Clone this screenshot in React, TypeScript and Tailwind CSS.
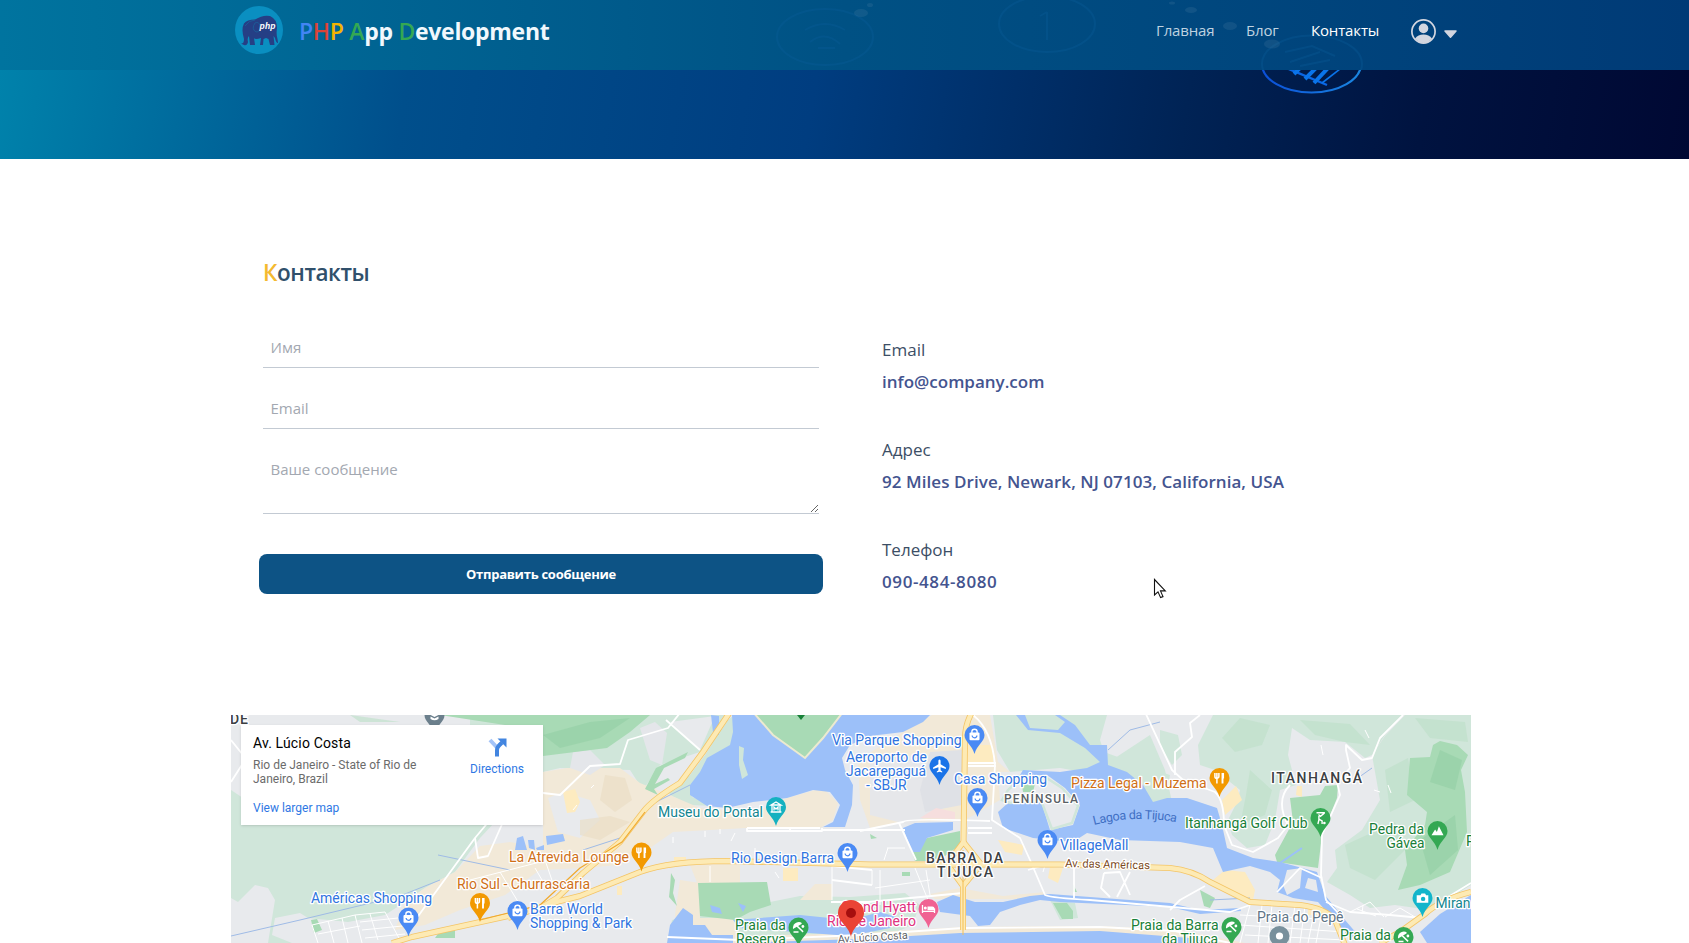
type Glyph = "bag" | "food" | "museum" | "plane" | "bed" | "beach" | "golf" | "peak" | "camera" | "school";

const LIGHT = "#d0e6da";
const PARK = "#a8dab5";
const WATER = "#9cc0f9";
const SAND = "#f2e9d8";
const BUILT = "#e8eaed";

function GlyphShape({ kind, color }: { kind: Glyph; color: string }) {
  switch (kind) {
    case "bag":
      return (
        <g>
          <path d="M-2.6,-2V-3.4A2.6,2.4 0 0 1 2.6,-3.4V-2" fill="none" stroke="#fff" strokeWidth="1.4" />
          <rect x="-5" y="-2.4" width="10" height="7.6" rx="1" fill="#fff" />
          <path d="M-2.4,0.6A2.4,2.2 0 0 0 2.4,0.6" fill="none" stroke={color} strokeWidth="1.2" />
        </g>
      );
    case "food":
      return (
        <g stroke="#fff" fill="none">
          <path d="M-4.6,-5V-1.6A2,2 0 0 0 -0.6,-1.6V-5M-2.6,-5V5.4" strokeWidth="1.5" />
          <path d="M3,-5V5.4M3.6,-5V0.5" strokeWidth="1.9" />
        </g>
      );
    case "museum":
      return (
        <g stroke="#fff" fill="none" strokeWidth="1.3">
          <path d="M-5,-2L0,-5L5,-2ZM-5.4,5H5.4M-4,-1.5V4.5M4,-1.5V4.5" />
          <path d="M-2,3.5V0L0,2L2,0V3.5" />
        </g>
      );
    case "plane":
      return (
        <path
          d="M0,-6.4C0.9,-6.4 1.1,-5.4 1.1,-4.6V-1.8L6.4,1.6V3L1.1,1.3V4.2L2.7,5.4V6.4L0,5.7L-2.7,6.4V5.4L-1.1,4.2V1.3L-6.4,3V1.6L-1.1,-1.8V-4.6C-1.1,-5.4 -0.9,-6.4 0,-6.4Z"
          fill="#fff"
        />
      );
    case "bed":
      return (
        <g>
          <path d="M-6,-4V4M6,-0.5V4M-6,2.4H6" stroke="#fff" strokeWidth="1.3" />
          <circle cx="-3.2" cy="-0.9" r="1.5" fill="#fff" />
          <path d="M-1,1.3V-2.6H3.8A2.2,2.2 0 0 1 6,-0.4V1.3Z" fill="#fff" />
        </g>
      );
    case "beach":
      return (
        <g>
          <path d="M-5.5,1.5A6,6 0 0 1 2,-5.2Q4,-4.6 3,-3.4Z" fill="#fff" />
          <path d="M-2,-2L4.6,4.4M-5,4.6H0" stroke="#fff" strokeWidth="1.5" />
          <circle cx="4.4" cy="-1" r="1.4" fill="#fff" />
        </g>
      );
    case "golf":
      return (
        <g stroke="#fff" fill="none" strokeWidth="1.4">
          <path d="M-4,-5.2H4.4M4,-5L0,-1.6L-2,-3.5M-1.6,-2V2L-2.6,6M-1.2,1.4L1.6,3V6" />
          <circle cx="3.9" cy="5" r="0.6" fill="#fff" />
        </g>
      );
    case "peak":
      return <path d="M-6,4.2L-2.4,-1.4L-0.6,0.9L1.4,-4.8L6,4.2Z" fill="#fff" />;
    case "camera":
      return (
        <g>
          <path d="M-5.8,-2.8H-2L-1,-4.4H2.6L3.6,-2.8H5.8V4.8H-5.8Z" fill="#fff" />
          <circle cx="0.6" cy="0.9" r="2.2" fill={color} />
        </g>
      );
    case "school":
      return (
        <g>
          <path d="M-5,-0.6L0,-3L5,-0.6L0,2Z" fill="#fff" />
          <path d="M-4,1.6V4Q0,6.4 4,4V1.6L0,3.6Z" fill="#fff" />
        </g>
      );
    default:
      return null;
  }
}

const PIN = "M0,-10A10,10 0 0 1 10,0C10,7 2.5,9.5 0,19C-2.5,9.5 -10,7 -10,0A10,10 0 0 1 0,-10Z";

const pins: { x: number; y: number; color: string; kind: Glyph }[] = [
  { x: 434.5, y: 715, color: "#6b7f8c", kind: "school" },
  { x: 408.5, y: 917.5, color: "#4a8af4", kind: "bag" },
  { x: 480, y: 903, color: "#f29900", kind: "food" },
  { x: 517.5, y: 911, color: "#4a8af4", kind: "bag" },
  { x: 776, y: 807, color: "#15b1c0", kind: "museum" },
  { x: 641.5, y: 852.5, color: "#f29900", kind: "food" },
  { x: 847.5, y: 853, color: "#4a8af4", kind: "bag" },
  { x: 798.5, y: 927.5, color: "#34a853", kind: "beach" },
  { x: 974.5, y: 735, color: "#4a8af4", kind: "bag" },
  { x: 939.5, y: 766, color: "#1a73e8", kind: "plane" },
  { x: 977.5, y: 798, color: "#4a8af4", kind: "bag" },
  { x: 1047.5, y: 840, color: "#4a8af4", kind: "bag" },
  { x: 928.5, y: 909, color: "#f06292", kind: "bed" },
  { x: 1219.5, y: 778, color: "#f29900", kind: "food" },
  { x: 1320.5, y: 818, color: "#34a853", kind: "golf" },
  { x: 1437.5, y: 831, color: "#34a853", kind: "peak" },
  { x: 1422.5, y: 898, color: "#12b5cb", kind: "camera" },
  { x: 1231.5, y: 927, color: "#34a853", kind: "beach" },
  { x: 1403.5, y: 937, color: "#34a853", kind: "beach" },
];

const BLUE = "#2f74e0";
const ORANGE = "#cf6f17";
const GREEN = "#188038";
const labels: { t: string; x: number; y: number; w: number; c: string }[] = [
  { t: "Américas Shopping", x: 311, y: 903, w: 121, c: BLUE },
  { t: "Rio Sul - Churrascaria", x: 457, y: 889, w: 133, c: ORANGE },
  { t: "Barra World", x: 530, y: 914, w: 73, c: BLUE },
  { t: "Shopping & Park", x: 530, y: 928, w: 102, c: BLUE },
  { t: "La Atrevida Lounge", x: 509, y: 862, w: 120, c: ORANGE },
  { t: "Museu do Pontal", x: 658, y: 817, w: 105, c: "#12858f" },
  { t: "Rio Design Barra", x: 731, y: 863, w: 103, c: BLUE },
  { t: "Via Parque Shopping", x: 832, y: 745, w: 129.5, c: BLUE },
  { t: "Aeroporto de", x: 846, y: 762, w: 81, c: BLUE },
  { t: "Jacarepaguá", x: 846, y: 776, w: 80, c: BLUE },
  { t: "- SBJR", x: 866, y: 790, w: 40.5, c: BLUE },
  { t: "Casa Shopping", x: 954, y: 784, w: 93, c: BLUE },
  { t: "VillageMall", x: 1060, y: 850, w: 68.5, c: BLUE },
  { t: "Pizza Legal - Muzema", x: 1071, y: 788, w: 135.5, c: ORANGE },
  { t: "Itanhangá Golf Club", x: 1185, y: 828, w: 122.5, c: GREEN },
  { t: "Pedra da", x: 1369, y: 834, w: 55, c: GREEN },
  { t: "Gávea", x: 1386.5, y: 848, w: 38, c: GREEN },
  { t: "P", x: 1466, y: 846, w: 9, c: GREEN },
  { t: "Miran", x: 1435.5, y: 908, w: 35, c: "#12858f" },
  { t: "Praia da Barra", x: 1131, y: 930, w: 87.5, c: GREEN },
  { t: "da Tijuca", x: 1162, y: 944, w: 56, c: GREEN },
  { t: "Praia do Pepê", x: 1257, y: 922, w: 86.5, c: "#5f7587" },
  { t: "Praia da", x: 1340, y: 940, w: 51, c: GREEN },
  { t: "Praia da", x: 735, y: 930, w: 51, c: GREEN },
  { t: "Reserva", x: 736, y: 943.5, w: 50, c: GREEN },
  { t: "Grand Hyatt", x: 841, y: 911.5, w: 75, c: "#e0337f" },
  { t: "Rio de Janeiro", x: 827, y: 925.5, w: 89, c: "#e0337f" },
];

const highways = [
  "M392,943L412,937L508,916L540,908L557,898L583,873L620,842L643,812Q652,800 680,783L703,752L730,712",
  "M508,918L560,901L580,896L640,872Q670,861 727,861L870,864.5H1060L1170,868Q1192,870 1210,882L1250,902L1300,905Q1325,908 1335,920L1345,945",
  "M972,712Q965,725 965,738L963.5,842M963,884V930",
  "M963.5,842L981,864L963,886L947,864Z",
  "M1380,943L1400,932L1425,914Q1440,900 1471,892",
];

const streets = [
  "M231,782L245,760M231,740L243,755",
  "M408,930L475,838L500,808L543,793L560,795L590,766L620,764L628,740L668,728L680,713M666,720L700,750",
  "M475,838L478,858L488,856L503,822",
  "M747,828H820M747,828V831H822V828M790,828V831M822,830L905,830",
  "M860,831L903,822Q905,818 990,821M899,823L916,860",
  "M973,715Q992,730 995,765L992,820L1020,838L1030,860L1045,895Q1052,898 1090,900L1230,912L1250,905",
  "M968,763H996M968,766H996M968,828H992M968,833H992",
  "M667,937L740,940L860,935L963,928L1100,927L1175,931L1230,943",
  "M1145,712L1172,770L1183,780L1215,792Q1224,800 1224,825L1232,845L1253,852L1278,838L1288,825Q1275,800 1290,785",
  "M1200,715L1190,723L1192,737L1175,752L1175,775",
  "M1403,715L1380,738L1372,758L1362,760L1346,745V750L1350,768L1337,782L1340,795L1322,835L1321,875L1326,900L1340,915",
  "M1326,902L1350,912L1390,915L1422,918L1435,905L1471,883",
  "M1104,873L1120,872L1130,895M1104,873L1101,888L1110,897M1117,897L1130,872",
  "M1074,868V898M1028,870L1045,865",
  "M1205,886L1180,900L1170,910",
  "M832,866L872,870M832,880L872,885M831,902H868L963,893",
  "M1277,892L1300,868L1322,878",
];

const grids = [
  "M312,925L355,915L385,912L400,940M312,925L318,943M328,921L334,943M342,918L348,943M318,934L360,926M355,915L362,943M370,914L378,940M360,922L398,918M362,930L402,926M365,938L405,934",
  "M1262,905L1258,943M1272,905L1268,943M1295,905L1290,943M1305,906L1300,943M1315,908L1308,943M1322,912L1316,943M1240,915L1340,920M1240,925L1345,932M1245,935L1345,940M1250,905L1240,943",
  "M1350,912L1370,902L1384,917M1357,909L1376,916M1363,905L1362,914M1385,917L1400,908L1415,917",
  "M880,870V905M915,868L928,900M926,870L930,895M875,888L930,880M887,848H905M888,848L884,860M1043,872L1045,865H1060",
  "M673,843v-6M705,831v6M720,829v5M735,833l-4,8M755,848v6M775,872l4,6M577,805l-4,5M594,785l-3,3M832,866V900M872,870V885M710,866V882",
  "M1321,745l2,10M1374,790l6,2M1388,785l3,8M1365,730l4,8",
  "M545,860L556,892M500,872L520,905M535,868L542,880M470,880L540,862",
];

function MapCanvas() {
  return (
    <svg className="block h-full w-full" viewBox="231 715 1240 228" fontFamily="Roboto, sans-serif">
      <rect x="231" y="715" width="1240" height="228" fill={BUILT} />
      <g fill={LIGHT}>
        <path d="M255,715H725L720,740L700,752L660,765L643,790L630,770L560,768L543,772V750H470V715Z" />
        <path d="M231,822H495L480,838L455,872L425,888L405,902L385,915L348,922L308,918L300,913L275,918L272,935L292,943H268L275,900L268,888L255,885L238,902L231,898Z" />
        <path d="M231,790L243,798V825H231Z" />
        <path d="M733,716L740,745L718,762L702,780L690,785L692,797L715,806L690,805L672,796L665,790L690,775L705,755L728,720Z" />
        <path d="M993,715H1107L1100,740L1104,752L1140,765L1170,775L1165,800L1130,780L1060,768L1010,772L997,750Z" />
        <path d="M1115,758L1150,735L1165,770L1172,802H1150L1135,778Z" />
        <path d="M1160,730L1178,735L1182,755L1172,765L1160,745Z" />
        <path d="M1213,715H1403L1385,735L1372,755L1365,758L1345,742L1310,740L1292,728L1288,755L1296,785L1280,790L1275,820L1265,845L1247,848L1232,835L1228,820L1238,800L1240,790L1215,770L1200,765L1198,745Z" />
        <path d="M1372,755L1385,736L1405,715H1471V885L1430,910L1395,905L1370,908L1350,895L1327,882L1337,868L1335,850L1362,830L1380,800Z" />
        <path d="M667,943L672,920L700,912L770,902L800,896L850,897L905,893L920,905L912,925L890,935L740,938Z" />
        <path d="M1050,900L1075,903L1078,918L1060,920Z" />
      </g>
      <g fill="#bfe0ca" opacity="0.65">
        <path d="M1240,718L1270,725L1262,745L1235,752L1222,738Z" />
        <path d="M1300,720L1350,724L1370,745L1345,742L1315,735Z" />
        <path d="M1250,770L1272,790L1265,815L1240,825L1246,795Z" />
        <path d="M1415,718L1465,722L1468,742L1430,738Z" />
        <path d="M1345,845L1395,822L1405,850L1375,880L1350,868Z" />
        <path d="M1385,770L1408,758L1415,800L1390,812Z" />
        <path d="M350,715L400,722H360Z" />
      </g>
      <g fill={SAND}>
        <path d="M543,772L567,768L620,768L640,783L672,796L700,808L755,812L787,798L823,788L838,803L833,820L820,828H747L673,832L650,848L620,865L583,868L540,870L505,895L460,910L425,925L395,930L405,902L425,888L455,872L480,846L510,842L543,848Z" />
        <path d="M932,715H990L998,762L1010,772H998L1000,800L965,820L905,822L870,828L860,800L858,760L903,732Z" />
        <path d="M690,865L740,862V885H698Z" />
        <path d="M680,880L700,883V918H733L740,938H680L675,915Z" />
        <path d="M800,900L815,884H832V900Z" />
        <path d="M930,894L960,888L1003,896L1045,892V899H935Z" />
        <path d="M667,938L860,933L963,927L1100,926L1180,930L1245,943H667Z" />
      </g>
      <path d="M870,760L955,752L960,800L910,825L870,815Z" fill="#e6e7ea" />
      <path d="M920,790L930,752L962,750V805L925,812Z" fill="#dfe1e6" />
      <path d="M920,818L936,808L955,812V819Z" fill="#f6dede" />
      <path d="M573,752L590,750L605,765L590,775L570,768Z" fill="#e4e6ea" />
      <path d="M640,728L655,722L667,733L662,765L650,760Z" fill="#e4e6ea" />
      <path d="M670,722L715,716L700,750Z" fill="#e8eaed" />
      <path d="M1106,728L1140,715L1165,716L1150,732L1120,752L1106,750Z" fill="#e8eaed" />
      <path d="M548,798L563,792L590,800L600,820L580,838L558,832Z" fill={BUILT} />
      <g fill="#fdebc0">
        <path d="M563,792L575,789L580,802L575,812L567,813Z" />
        <path d="M966,745H993V763H966Z" />
        <path d="M674,857H686V862H674ZM783,868H798V881H783ZM617,886H622V895H617Z" />
        <path d="M998,840L1024,845L1022,855L1005,852Z" />
        <path d="M1213,880L1225,870L1245,872L1255,890L1253,900L1235,893Z" />
        <path d="M1236,786L1242,800L1225,815L1222,800ZM1297,786H1302V797L1296,795Z" />
        <path d="M1308,905H1325V915H1308ZM1050,867L1063,868L1058,883L1048,878Z" />
      </g>
      <g fill={PARK}>
        <path d="M543,715H650L630,732L607,748L575,752L543,756Z" />
        <path d="M440,715H543V735L505,725Z" />
        <path d="M311,920L317,919L322,930L314,933ZM435,938L442,928L447,932L455,930V938Z" />
        <path d="M671,873L675,880L673,893L677,906L669,897L670,888Z" />
        <path d="M688,752L685,758L664,768L655,784L668,778L670,780L654,789L658,795L645,789L656,768Z" />
        <path d="M698,883L767,882L771,905L750,912L735,920L700,916Z" />
        <path d="M927,838L960,831V845L945,856L930,861H915L912,852Z" />
        <path d="M1290,798L1320,795L1325,786L1338,785L1337,798L1322,835L1318,868L1277,862L1275,855L1293,822Z" />
        <path d="M1433,745L1440,741L1457,745L1468,755L1461,770L1465,792L1467,832L1450,872L1420,885L1398,890L1407,865L1405,850L1425,825L1427,812L1407,795L1410,758L1430,757Z" />
        <path d="M1200,890L1215,898L1210,908L1204,906Z" />
        <path d="M870,834L877,838L871,839ZM902,872h8v4h-8ZM1073,884l4,8h-4ZM1053,903h14l6,8v8h-11Z" />
      </g>
      <g fill="#93cfa5" opacity="0.6">
        <path d="M1440,750L1462,760L1455,790L1430,782Z" />
        <path d="M1420,840L1455,815L1458,850L1430,875Z" />
        <path d="M543,735L590,722L630,718L600,738L560,748Z" />
      </g>
      <g fill="#eaddc3" opacity="0.6">
        <path d="M605,775L625,778L632,800L615,812L600,800Z" />
        <path d="M580,820L610,816L630,822L600,840L580,835Z" />
      </g>

      <g fill={WATER}>
        <path d="M732,715L733,732L730,745L707,758L700,772L690,785V795L707,806L727,808L753,802L787,798L813,790L830,792L840,805L833,822L823,827H845L852,805L853,785L845,770L842,758L850,745L870,736L903,732L923,722L930,715Z" />
        <path d="M711,715L719,716V735L713,732Z" />
        <path d="M903,828L915,823L953,822V830L927,838L920,852L912,852Z" />
        <path d="M1016,715H1025L1030,728L1058,730L1065,722L1055,715H1060L1075,725L1090,745L1107,745L1108,765L1127,772L1143,785L1153,802L1167,798H1187L1217,808L1222,825L1227,848L1253,858L1280,862L1317,872L1325,895L1345,920L1358,935L1350,938L1318,902L1293,898L1277,892L1280,880L1270,872L1250,866L1223,872L1213,848L1180,842L1120,840L1087,833L1073,842L1033,838L1003,828L998,812L1008,803L1040,798L1050,830L1073,825L1080,805L1065,788L1047,775L1020,775L1023,770L1060,772L1087,768L1100,762L1085,748L1060,733L1028,730Z" />
        <path d="M683,908L693,915V925H705L712,935H733V943H667L670,925Z" />
        <path d="M710,905L720,908L722,914L712,912ZM738,903L746,906L743,912Z" />
        <path d="M733,920L800,915L850,920L880,912L900,918L890,928L850,936L740,928Z" />
        <path d="M937,902L953,895L975,902L1003,902L1030,896L1050,894L1170,903L1200,910L1240,908L1241,911L1200,914L1170,907L1060,902L1040,900L1020,905L1000,912L990,925L978,926L970,916L940,912Z" />
        <path d="M733,943L860,939L960,933L1100,931L1190,938L1215,943Z" />
        <path d="M1471,895L1440,914L1420,932L1427,943H1471Z" />
        <path d="M546,836L563,834L565,841L547,845ZM517,838L523,836L527,850H515ZM528,840H534L535,850L529,848ZM536,848L544,845V850H537ZM546,838L553,835Z" />
      </g>
      <path
        d="M1022,777L1045,777L1062,788L1078,806L1072,823L1052,829L1041,800L1010,803L1002,800L1008,790Z"
        fill={BUILT}
        stroke={LIGHT}
        strokeWidth="2.5"
      />
      <path d="M1022,785L1035,784L1033,792H1023Z" fill={PARK} />
      <path d="M1287,870L1302,868L1300,888L1287,895L1283,885ZM1308,878L1316,880L1318,892L1305,888Z" fill={BUILT} />
      <path d="M753,712L773,735L805,758L823,738L843,712Z" fill={PARK} stroke="#ecead0" strokeWidth="2" />
      <path d="M739,746L744,748L743,760L748,775L742,779L739,765Z" fill={LIGHT} />
      <path
        d="M231,936L300,920L400,896L440,880M438,855L510,870M583,850L620,838L650,805L690,785M1108,750L1130,730L1160,722M1355,780L1372,768M1210,900L1250,898"
        fill="none"
        stroke="#9fbbe6"
        strokeWidth="1"
      />
      <path d="M1277,865L1302,848" stroke={WATER} strokeWidth="2" />

      <g fill="none" stroke="#fff">
        {grids.map((d) => (
          <path key={d} d={d} strokeWidth="1" />
        ))}
        {streets.map((d) => (
          <path key={d} d={d} strokeWidth="1.8" strokeLinejoin="round" />
        ))}
      </g>
      <g fill="none" strokeLinejoin="round">
        {highways.map((d) => (
          <path key={d} d={d} stroke="#f4c566" strokeWidth="6" />
        ))}
        {highways.map((d) => (
          <path key={d} d={d} stroke="#fdeab4" strokeWidth="4.4" />
        ))}
        <path d="M480,920L540,905L580,868L622,842L645,812" stroke="#f0a92e" strokeWidth="1.2" />
        <path d="M963,935V850" stroke="#f4bf55" strokeWidth="1" />
      </g>

      {pins.map((p) => (
        <g key={`${p.x}-${p.y}`} transform={`translate(${p.x} ${p.y})`}>
          <path d={PIN} fill={p.color} />
          <GlyphShape kind={p.kind} color={p.color} />
        </g>
      ))}
      <path d="M797,715H805L801,720Z" fill="#188038" />
      <circle cx="1279.5" cy="936" r="10" fill="#78909c" />
      <circle cx="1279.5" cy="936" r="3.6" fill="#fff" />

      <g stroke="#fff" strokeWidth="2.6" strokeLinejoin="round" paintOrder="stroke" fontSize="14">
        {labels.map((l) => (
          <text key={`${l.t}-${l.x}`} x={l.x} y={l.y} textLength={l.w} lengthAdjust="spacingAndGlyphs" fill={l.c}>
            {l.t}
          </text>
        ))}
        <g fill="#3c4043" fontWeight="500">
          <text x="926" y="863" textLength="77">BARRA DA</text>
          <text x="937" y="877" textLength="56">TIJUCA</text>
          <text x="1271" y="783" textLength="91">ITANHANGÁ</text>
          <text x="230" y="724" textLength="18">DE</text>
          <text x="1004" y="803" fontSize="12" textLength="74" fill="#5a5f66">PENÍNSULA</text>
        </g>
        <text x="1065" y="867" fontSize="11.5" textLength="85" fill="#7b4a1c" transform="rotate(1.5 1065 867)">
          Av. das Américas
        </text>
        <text x="838" y="943" fontSize="11" textLength="70" fill="#5f6368" transform="rotate(-3.5 838 943)">
          Av. Lúcio Costa
        </text>
      </g>
      <path id="lagoon" d="M1094,825Q1136,814 1180,823" fill="none" />
      <text fontSize="12.5" fill="#3f6fc4">
        <textPath href="#lagoon" textLength="83">Lagoa da Tijuca</textPath>
      </text>
      <g transform="translate(851 913)">
        <path d="M0,-13A13,13 0 0 1 13,0C13,9 2.5,12 0,24C-2.5,12 -13,9 -13,0A13,13 0 0 1 0,-13Z" fill="#ea4335" />
        <circle r="5" fill="#a50e0e" />
      </g>
    </svg>
  );
}

function Elephant() {
  return (
    <svg className="size-12 shrink-0" viewBox="0 0 48 48">
      <circle cx="24" cy="24" r="24" fill="#0a8fc1" />
      <path
        d="M6,37.5Q9,38 9,33Q6,23 9,17.5Q12,13.5 20,13.5Q28,8.5 35,10Q42,13 42,22Q41,28 42.5,33L43,37Q41,37 40,32L38.5,30L39.5,39H35L33.5,33L31,32L28.5,33L28,39H25L26,32Q20,34 19,32L20,39H15L14,30Q12,32 13,36Q12,40 9,39Z"
        fill="#253f85"
      />
      <path d="M20,17Q24,15 25,20Q26,26 21,26Q16,23 20,17ZM10,20Q14,14 20,14" fill="none" stroke="#1b5c98" strokeWidth="0.9" />
      <text x="24.5" y="22.5" fontFamily="Liberation Sans, sans-serif" fontSize="8.5" fontWeight="700" fontStyle="italic" fill="#fff" textLength="16">
        php
      </text>
    </svg>
  );
}

function Header() {
  return (
    <header className="relative flex h-[70px] bg-gradient-to-r from-[#00749f] via-[#005184] to-[#003a76] pl-[235px]">
      <svg className="absolute inset-0 h-[70px] w-full" viewBox="0 0 1689 70">
        <g fill="none" stroke="#0b5f9c" strokeWidth="2" opacity="0.3">
          <ellipse cx="825" cy="37" rx="48" ry="28" />
          <path d="M805,30Q825,18 845,30M810,42Q825,30 840,44M818,48H835" />
          <ellipse cx="1047" cy="24" rx="48" ry="28" />
          <path d="M1047,12V40M1040,16L1047,12" />
          <ellipse cx="1312" cy="64" rx="50" ry="28.5" />
          <path d="M1285,52L1312,46L1335,56M1290,62L1320,52M1300,66L1330,60" />
        </g>
        <g fill="#6a93b0" opacity="0.16">
          <ellipse cx="861" cy="13" rx="7" ry="4" />
          <ellipse cx="870" cy="5" rx="3" ry="2" />
          <ellipse cx="1172" cy="3" rx="3" ry="1.5" />
          <ellipse cx="1191" cy="10" rx="6" ry="3" />
          <ellipse cx="1230" cy="26" rx="7" ry="4" />
          <ellipse cx="1272" cy="44" rx="8" ry="4.5" />
        </g>
      </svg>
      <div className="relative flex h-[60px] w-full items-center">
        <Elephant />
        <div className="mt-[3px] ml-4 text-[23px] font-bold tracking-[-0.3px] whitespace-nowrap text-[#f1f8fd]">
          <span className="font-semibold text-[#4285f4]">P</span>
          <span className="font-semibold text-[#db4437]">H</span>
          <span className="font-semibold text-[#f4b400]">P</span>{" "}
          <span className="font-semibold text-[#34a853]">A</span>pp{" "}
          <span className="font-semibold text-[#34a853]">D</span>evelopment
        </div>
      </div>
      <nav className="relative flex h-[62px] w-[533px] shrink-0 items-center text-[15px] tracking-[-0.15px] text-[#bfd2e0]">
        <a className="mb-0.5 w-[90px] shrink-0">Главная</a>
        <a className="mb-0.5 w-[65px] shrink-0">Блог</a>
        <a className="mb-0.5 w-[100px] shrink-0 text-white">Контакты</a>
        <svg className="size-[25px]" viewBox="0 0 25 25">
          <circle cx="12.5" cy="12.5" r="11.6" fill="none" stroke="#d3d6e0" strokeWidth="1.7" />
          <circle cx="12.5" cy="9.4" r="4.8" fill="#d3d6e0" />
          <path d="M4,19.5Q7,15.6 12.5,15.6T21,19.5Q17,24 12.5,24T4,19.5Z" fill="#d3d6e0" />
        </svg>
        <svg className="mt-[5px] ml-2 h-2 w-[13px]" viewBox="0 0 13 8">
          <path d="M1,1H12L6.5,7.2Z" fill="#d3d6e0" stroke="#d3d6e0" strokeWidth="1.5" strokeLinejoin="round" />
        </svg>
      </nav>
    </header>
  );
}

function Field({ label, value, valueClass }: { label: string; value: string; valueClass: string }) {
  return (
    <div className="h-[100px] text-[17px] leading-8">
      <div className="text-[#3c4e65]">{label}</div>
      <div className={`font-semibold text-[#44548f] ${valueClass}`}>{value}</div>
    </div>
  );
}

function PlaceCard() {
  return (
    <div className="absolute top-2.5 left-2.5 flex h-[100px] w-[302px] justify-between bg-white py-2.5 pr-[19px] pl-3 font-['Roboto',sans-serif] shadow">
      <div className="w-[190px]">
        <div className="text-sm leading-4 tracking-[0.15px] text-black">Av. Lúcio Costa</div>
        <div className="mt-[7px] text-xs leading-[14px] text-[#6b6b6b]">
          Rio de Janeiro - State of Rio de
          <br />
          Janeiro, Brazil
        </div>
        <div className="mt-[15px] text-xs leading-[14px] text-[#2f78e4]">View larger map</div>
      </div>
      <div className="flex flex-col items-center text-xs leading-[14px] text-[#2f78e4]">
        <svg className="mt-[3px] size-[19px]" viewBox="0 0 19 19">
          <path d="M2,2L9.5,10" stroke="#a3c3f7" strokeWidth="4" />
          <path d="M9,18.5V12Q9,9.5 11,7.5L14,4.5" fill="none" stroke="#4285e0" strokeWidth="4" />
          <path d="M9.5,0.5H18.5V9.5Z" fill="#4285e0" />
        </svg>
        <span className="mt-[5px]">Directions</span>
      </div>
    </div>
  );
}

const inputClass =
  "block w-full border-b border-[#c3cad3] bg-transparent px-[7.5px] text-[15px] text-[#2c4a64] outline-none placeholder:text-[#a3a8b1]";

export default function App() {
  return (
    <div className="relative h-[943px] overflow-hidden bg-white font-['Open_Sans',sans-serif]">
      <Header />
      <div className="h-[89px] bg-[linear-gradient(99deg,#0082ab_0%,#004f8c_24%,#003d80_48%,#002355_70%,#001340_84%,#000833_100%)] pl-[1258px]">
        <svg className="block h-[26px] w-[108px]" viewBox="1258 70 108 26">
          <defs>
            <linearGradient id="ring" x1="0" x2="1">
              <stop offset="0" stopColor="#0b4fd8" />
              <stop offset="1" stopColor="#1a86e0" />
            </linearGradient>
          </defs>
          <ellipse cx="1311.5" cy="64" rx="49.5" ry="28.5" fill="none" stroke="url(#ring)" strokeWidth="2.2" />
          <path d="M1284,67L1327,85" fill="none" stroke="#0a66e4" strokeWidth="2.4" />
          <path d="M1294,74L1300,68M1305,79L1316,68M1314,83L1328,68" fill="none" stroke="#0a74ea" strokeWidth="4" />
          <path d="M1322,83L1340,69" fill="none" stroke="#0a74ea" strokeWidth="1.6" />
        </svg>
      </div>
      <main className="pr-[218px] pl-[231px]">
        <section className="flex h-[556px] pl-7">
          <form className="w-[564px]">
            <div className="px-1">
              <h2 className="pt-[98px] text-[22.5px] leading-8 font-semibold tracking-[-0.45px] text-[#30506b]">
                <span className="text-[#f4b92f]">К</span>онтакты
              </h2>
              <input className={`${inputClass} mt-[39px] h-10 pb-0.5`} placeholder="Имя" />
              <input className={`${inputClass} mt-[21px] h-10 pb-0.5`} placeholder="Email" />
              <textarea className={`${inputClass} mt-[21px] h-16 resize-y py-2`} placeholder="Ваше сообщение" />
            </div>
            <button
              type="button"
              className="mt-10 h-10 w-full rounded-lg bg-[#0d5385] pt-0.5 text-[13px] font-bold tracking-[-0.27px] text-white"
            >
              Отправить сообщение
            </button>
          </form>
          <div className="ml-[59px] pt-[175px]">
            <Field label="Email" value="info@company.com" valueClass="" />
            <Field label="Адрес" value="92 Miles Drive, Newark, NJ 07103, California, USA" valueClass="tracking-[0.06px]" />
            <Field label="Телефон" value="090-484-8080" valueClass="tracking-[0.6px]" />
          </div>
        </section>
        <section className="relative h-[228px]">
          <MapCanvas />
          <PlaceCard />
        </section>
      </main>
      <svg className="absolute top-[578px] left-[1153px] h-[21px] w-[14px]" viewBox="0 0 14 21">
        <path d="M1.5,1.5V17L5,13.8L7.6,19.6L10,18.6L7.5,12.9H12.3Z" fill="#fff" stroke="#111" strokeWidth="1.1" />
      </svg>
    </div>
  );
}
